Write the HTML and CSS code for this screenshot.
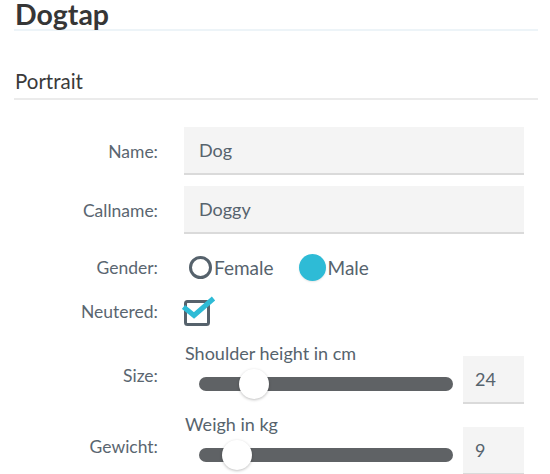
FILE: index.html
```html
<!DOCTYPE html>
<html>
<head>
<meta charset="utf-8">
<link rel="stylesheet" href="styles.css">
</head>
<body>
<div class="page">
  <h1 class="title">Dogtap</h1>
  <h2 class="section">Portrait</h2>
  <div class="form">
    <div class="row row-input">
      <label class="lbl">Name:</label>
      <div class="field">Dog</div>
    </div>
    <div class="row row-input">
      <label class="lbl">Callname:</label>
      <div class="field">Doggy</div>
    </div>
    <div class="row row-gender">
      <label class="lbl">Gender:</label>
      <div class="radios">
        <span class="radio"><span class="dot"></span>Female</span>
        <span class="radio checked"><span class="dot"></span>Male</span>
      </div>
    </div>
    <div class="row row-check">
      <label class="lbl">Neutered:</label>
      <div class="check">
        <svg width="34" height="30" viewBox="0 0 34 30">
          <rect x="3.5" y="5.5" width="23" height="23" rx="2" fill="none" stroke="#56626c" stroke-width="3"/>
          <path d="M1.5 11 L12 19.5 L31.5 2.5" fill="none" stroke="#2ebbd6" stroke-width="5" stroke-linejoin="miter"/>
        </svg>
      </div>
    </div>
    <div class="row row-slider">
      <label class="lbl">Size:</label>
      <div class="sl-wrap">
        <div class="sl-main">
          <div class="sl-cap">Shoulder height in cm</div>
          <div class="sl-area">
            <div class="track"><span class="thumb" style="left: 40px"></span></div>
          </div>
        </div>
        <div class="num">24</div>
      </div>
    </div>
    <div class="row row-slider">
      <label class="lbl">Gewicht:</label>
      <div class="sl-wrap">
        <div class="sl-main">
          <div class="sl-cap">Weigh in kg</div>
          <div class="sl-area">
            <div class="track"><span class="thumb" style="left: 23px"></span></div>
          </div>
        </div>
        <div class="num">9</div>
      </div>
    </div>
  </div>
</div>
</body>
</html>
```

FILE: styles.css
```css
* { box-sizing: border-box; }
html, body { margin: 0; padding: 0; background: #fff; }
body {
  font-family: Lato, "Open Sans", sans-serif;
  color: #5a6670;
  overflow: hidden;
}
.page {
  width: 524px;
  margin-left: 14px;
}
.title {
  margin: 0;
  font-size: 28.5px;
  line-height: 28px;
  font-weight: 700;
  color: #363636;
  padding: 0 0 1px 1px;
  border-bottom: 2px solid #edf4f8;
}
.section {
  margin: 38px 0 0 0;
  font-size: 20.5px;
  font-weight: 400;
  line-height: 24px;
  color: #3a3a3a;
  padding: 0 0 5px 1px;
  border-bottom: 2px solid #ebebeb;
}
.form {
  margin-top: 27px;
  width: 510px;
  display: flex;
  flex-direction: column;
}
.row {
  display: grid;
  grid-template-columns: 144px 1fr;
  column-gap: 26px;
  align-items: center;
  font-size: 17.5px;
}
.lbl { text-align: right; color: #5a6670; }
.row-input { height: 48px; margin-bottom: 11px; }
.field {
  height: 48px;
  background: #f4f4f4;
  border-bottom: 2px solid #dadada;
  padding-left: 15px;
  line-height: 46px;
  font-size: 18px;
  color: #56636d;
}
.row-gender { height: 30px; margin-top: 7px; }
.radios { display: flex; align-items: center; font-size: 19px; }
.radio { display: inline-flex; align-items: center; color: #56636d; margin-right: 25px; }
.radio .dot {
  width: 23px; height: 23px; border-radius: 50%;
  border: 3px solid #56626c;
  margin: 0 2px 0 5px;
}
.radio.checked .dot {
  width: 27px; height: 27px;
  border: none;
  background: #2ebbd6;
  margin-left: 0;
  margin-right: 2px;
  box-shadow: 0 1px 2px rgba(0,0,0,0.1);
}
.row-check { height: 30px; margin-top: 14px; }
.check { height: 30px; margin-left: -2px; }
.check svg { display: block; }
.row-slider { margin-top: 16px; height: 62px; }
.row-slider .lbl { padding-top: 4px; }
.row-slider + .row-slider { margin-top: 9px; }
.sl-wrap { display: flex; align-items: flex-end; height: 62px; }
.sl-main { flex: 1; }
.sl-cap { line-height: 22px; height: 22px; padding-left: 1px; font-size: 18px; color: #56636d; }
.sl-area { height: 40px; display: flex; align-items: center; padding-left: 15px; padding-right: 10px; }
.track {
  position: relative;
  width: 100%;
  height: 14px;
  border-radius: 7px;
  background: #5f6265;
}
.thumb {
  position: absolute;
  top: -8px;
  width: 30px;
  height: 30px;
  border-radius: 50%;
  background: #fff;
  box-shadow: 0 1px 3px rgba(0,0,0,0.25);
}
.num {
  width: 61px;
  height: 48px;
  background: #f4f4f4;
  border-bottom: 2px solid #dadada;
  padding-left: 12px;
  line-height: 46px;
  font-size: 18px;
  color: #56636d;
}
```
